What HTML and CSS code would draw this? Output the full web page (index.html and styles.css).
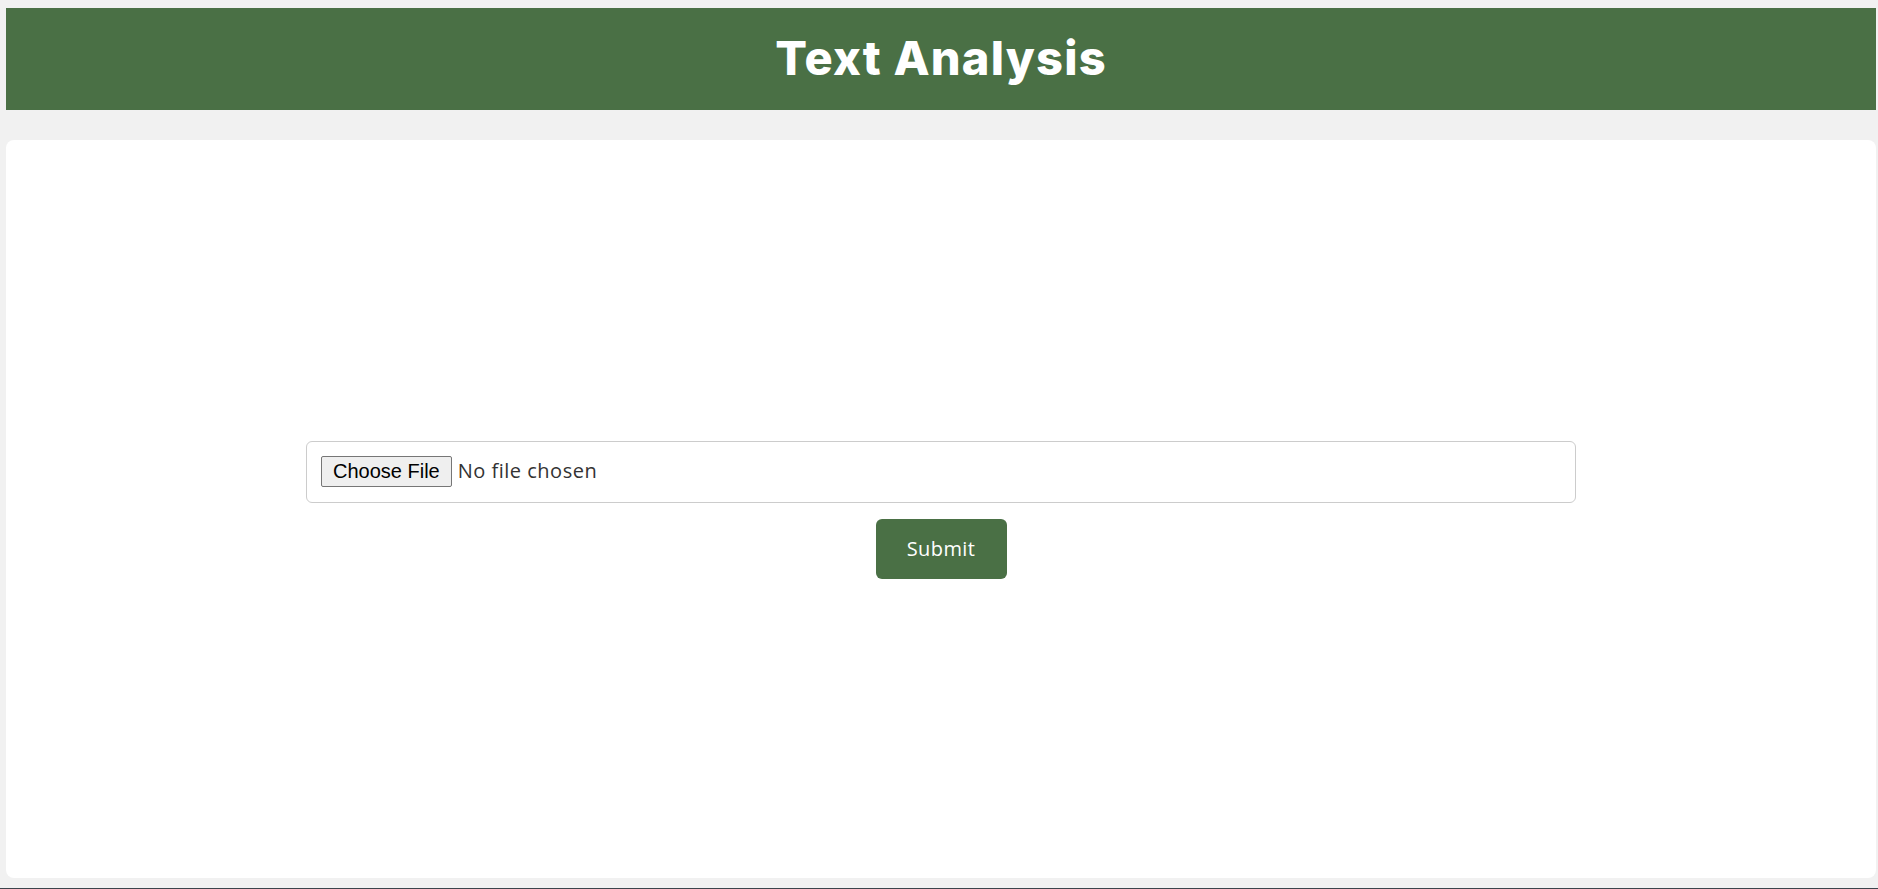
FILE: index.html
```html
<!DOCTYPE html>
<html lang="en">
<head>
<meta charset="utf-8">
<title>Text Analysis</title>
<link rel="stylesheet" href="styles.css">
</head>
<body>
<div class="page">
  <header class="topbar">
    <h1 class="title">Text Analysis</h1>
  </header>
  <main class="card">
    <form class="upload-form" onsubmit="return false;">
      <input class="file-input" type="file" name="file">
      <button class="submit-btn" type="submit">Submit</button>
    </form>
  </main>
</div>
<div class="bottom-line"></div>
</body>
</html>
```
FILE: styles.css
```css
html, body {
  margin: 0;
  padding: 0;
}
body {
  background: #f1f1f1;
  font-family: "Open Sans", "Liberation Sans", sans-serif;
  height: 889px;
  overflow: hidden;
  display: flex;
  flex-direction: column;
}
.page {
  padding: 8px 2px 0 6px;
  height: 880px;
  display: flex;
  flex-direction: column;
  gap: 30px;
}
.topbar {
  background: #4a7045;
  height: 102px;
  display: flex;
  align-items: center;
  justify-content: center;
  flex-shrink: 0;
}
.title {
  margin: 0 0 4px 0;
  color: #ffffff;
  font-family: "Inter", "Open Sans", sans-serif;
  font-weight: 800;
  font-size: 47px;
  letter-spacing: 1.2px;
}
.card {
  background: #ffffff;
  border-radius: 8px;
  height: 738px;
  display: flex;
  align-items: center;
  justify-content: center;
}
.upload-form {
  display: flex;
  flex-direction: column;
  align-items: center;
  gap: 16px;
  margin-top: 1px;
}
.file-input {
  box-sizing: border-box;
  width: 1270px;
  height: 62px;
  padding: 14px;
  border: 1px solid #cccccc;
  border-radius: 6px;
  font-family: "Open Sans", sans-serif;
  font-size: 20px;
  letter-spacing: 0.5px;
  color: #333333;
  background: #ffffff;
}
.file-input::file-selector-button {
  font-family: "Liberation Sans", Arial, sans-serif;
  font-size: 20px;
  letter-spacing: 0;
  height: 31px;
  padding: 0 11px;
  margin-right: 6px;
  border: 1px solid #767676;
  border-radius: 2px;
  background: #efefef;
  color: #000000;
}
.submit-btn {
  box-sizing: border-box;
  width: 131px;
  height: 60px;
  border: none;
  border-radius: 6px;
  background: #4a7045;
  color: #ffffff;
  font-family: "Open Sans", sans-serif;
  font-size: 20px;
  letter-spacing: 0.4px;
  cursor: pointer;
}
.bottom-line {
  height: 1px;
  margin-top: auto;
  background: #3c444c;
}
```
